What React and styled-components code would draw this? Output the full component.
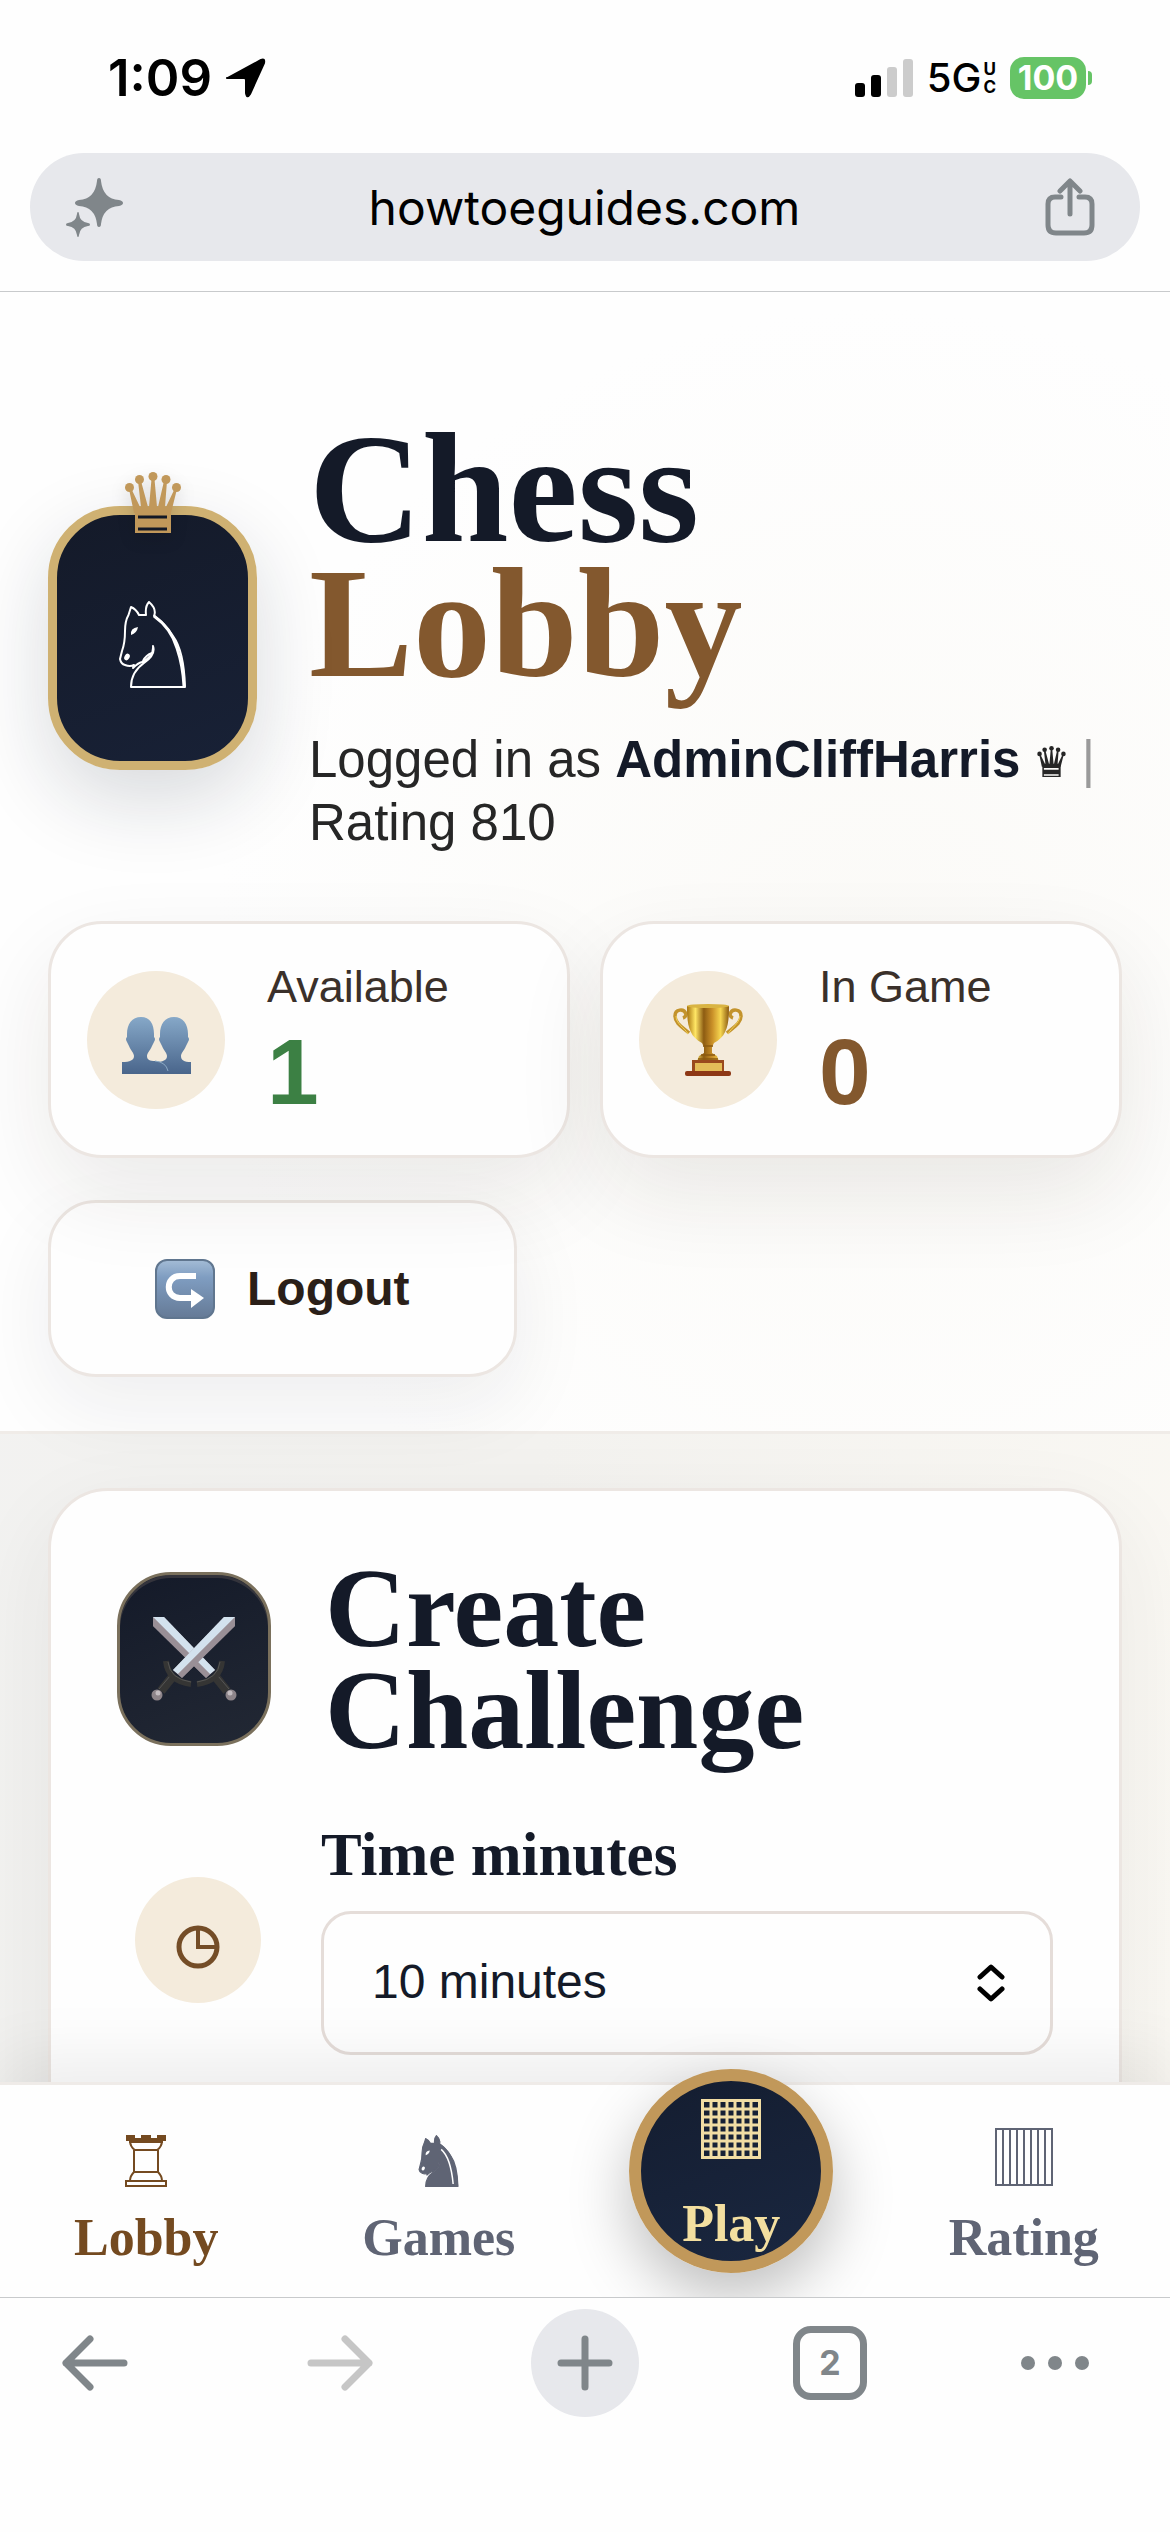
import styled, { createGlobalStyle } from 'styled-components'

const colors = {
  navy: '#141a28',
  brown: '#83582e',
  gold: '#c1985a',
  green: '#3c8044',
  cream: '#f4ebdc',
  line: '#ece6e2',
  slate: '#5f6474',
  chrome: '#80868a',
  pill: '#e7e8ec'
}

const serif = `'Liberation Serif', 'Times New Roman', serif`
const sans = `'Liberation Sans', Arial, sans-serif`
const system = `Inter, Roboto, sans-serif`

const GlobalStyle = createGlobalStyle`
  * {
    box-sizing: border-box;
  }
  body {
    margin: 0;
    background: #fefefe;
    color: ${colors.navy};
    font-family: ${sans};
  }
  svg {
    display: block;
    flex: none;
  }
  button {
    padding: 0;
    border: 0;
    background: none;
    color: inherit;
    font: inherit;
    cursor: pointer;
  }
`

function App() {
  return (
    <Screen>
      <GlobalStyle />
      <header>
        <StatusBar>
          <StatusGroup>
            <Clock>1:09</Clock>
            <LocationIcon />
          </StatusGroup>
          <StatusGroup>
            <SignalIcon />
            <Network>
              5G
              <NetworkBand>
                <span>U</span>
                <span>C</span>
              </NetworkBand>
            </Network>
            <Battery>100</Battery>
          </StatusGroup>
        </StatusBar>
        <AddressBar>
          <button aria-label="Assistant"><SparkleIcon /></button>
          <Address>howtoeguides.com</Address>
          <button aria-label="Share"><ShareIcon /></button>
        </AddressBar>
      </header>

      <Page>
        <Hero>
          <Intro>
            <Emblem>
              <Crown><QueenIcon width={56} height={61} /></Crown>
              <KnightIcon width={67} height={87} />
            </Emblem>
            <div>
              <Title>Chess <TitleAccent>Lobby</TitleAccent></Title>
              <Account>
                Logged in as <strong>AdminCliffHarris</strong> <InlineQueen width={29} height={31} /> <Divider>|</Divider> Rating 810
              </Account>
            </div>
          </Intro>
          <Stats>
            <Stat>
              <Disc size={138}><PeopleIcon /></Disc>
              <div>
                <StatLabel>Available</StatLabel>
                <StatValue color={colors.green}>1</StatValue>
              </div>
            </Stat>
            <Stat>
              <Disc size={138}><TrophyIcon /></Disc>
              <div>
                <StatLabel>In Game</StatLabel>
                <StatValue color={colors.brown}>0</StatValue>
              </div>
            </Stat>
          </Stats>
          <LogoutButton>
            <ReturnIcon />
            Logout
          </LogoutButton>
        </Hero>

        <Content>
          <Card>
            <CardHeader>
              <Badge><SwordsIcon /></Badge>
              <CardTitle>Create Challenge</CardTitle>
            </CardHeader>
            <Field>
              <Disc size={126}><TimeIcon /></Disc>
              <FieldBody>
                <Label htmlFor="minutes">Time minutes</Label>
                <SelectWrap>
                  <Select id="minutes" defaultValue="10">
                    <option value="5">5 minutes</option>
                    <option value="10">10 minutes</option>
                    <option value="15">15 minutes</option>
                  </Select>
                  <UpDownIcon />
                </SelectWrap>
              </FieldBody>
            </Field>
          </Card>
        </Content>
      </Page>

      <TabBar>
        <Tab href="#lobby" color="#744a20"><TabIcon><RookIcon /></TabIcon>Lobby</Tab>
        <Tab href="#games" color={colors.slate}><TabIcon><KnightIcon width={41} height={52} solid /></TabIcon>Games</Tab>
        <PlayTab href="#play"><TabIcon><BoardIcon /></TabIcon>Play</PlayTab>
        <Tab href="#rating" color={colors.slate}><TabIcon><BarsIcon /></TabIcon>Rating</Tab>
      </TabBar>

      <Toolbar>
        <ToolButton aria-label="Back"><ArrowIcon /></ToolButton>
        <ToolButton aria-label="Forward" faded><ArrowIcon flip /></ToolButton>
        <ToolButton aria-label="New tab" filled><PlusIcon /></ToolButton>
        <ToolButton aria-label="Tabs"><TabCount>2</TabCount></ToolButton>
        <MoreButton aria-label="More"><DotsIcon /></MoreButton>
      </Toolbar>
    </Screen>
  );
}

export default App;

const LocationIcon = () => (
  <svg width="40" height="40" viewBox="0 0 40 40">
    <path d="M2 20 35 2q4-2 3 3L24 36q-3 5-4-1V22q0-2-2-2H4q-5 0-2-0Z" fill="#000" stroke="#000" strokeWidth="2" strokeLinejoin="round" />
  </svg>
)

const SignalIcon = () => (
  <svg width="58" height="38" viewBox="0 0 58 38">
    <rect x="0" y="24" width="10" height="14" rx="3" />
    <rect x="16" y="16" width="10" height="22" rx="3" />
    <rect x="32" y="8" width="10" height="30" rx="3" fill="#ccc" />
    <rect x="48" y="0" width="10" height="38" rx="3" fill="#ccc" />
  </svg>
)

const SparkleIcon = () => (
  <svg width="58" height="60" viewBox="0 0 58 60" fill={colors.chrome}>
    <path d="M33 1q2 0 2 3 2 18 18 19 4 1 4 3t-4 3q-16 1-18 18 0 3-2 3t-2-3q-2-17-18-18-4-1-4-3t4-3q16-1 18-19 0-3 2-3Z" />
    <path d="M12 35q1 0 1 2 1 8 9 9 2 0 2 1.500t-2 1.500q-8 1-9 9 0 2-1 2t-1-2q-1-8-9-9-2 0-2-1.500t2-1.500q8-1 9-9 0-2 1-2Z" />
  </svg>
)

const ShareIcon = () => (
  <svg width="50" height="58" viewBox="0 0 50 58" fill="none" stroke={colors.chrome} strokeWidth="5" strokeLinecap="round" strokeLinejoin="round">
    <path d="M16 19h-6q-7 0-7 7v21q0 8 8 8h28q8 0 8-8V26q0-7-7-7h-6" />
    <path d="M25 36V4M15 13 25 3l10 10" />
  </svg>
)

const KnightIcon = ({ width, height, solid }) => (
  <svg width={width} height={height} viewBox="0 0 67 87" fill={solid ? 'currentColor' : 'none'} stroke="currentColor" strokeWidth="2" strokeLinejoin="round">
    <path d="M12 6 9.500 14Q6 20 6 30 6 42 3 50L1 58q1 5 5 6 5 2 9 0l-1 3q5-5 9-6 12-5 11-16 3 9-9 17-13 9-13 24h54Q65 50 54 35 46 22 35 15q3-7-5-14-4 4-3 13h-7Q17 8 12 6Z" />
    <path d="M35 15Q52 27 58 47q6 18 7 38" strokeWidth="3" fill="none" />
    {solid ? (
      <path d="M38 24q16 14 20 58" stroke="#fff" strokeWidth="2.500" fill="none" />
    ) : (
      <path d="M24 60q3-6 9-8" />
    )}
    <path d="M12 34q-1-7 7-8-1 6-7 8Z" fill={solid ? '#fff' : 'currentColor'} stroke="none" />
    <ellipse cx="8" cy="56" rx="2.500" ry="3.500" fill={solid ? '#fff' : 'currentColor'} stroke="none" transform="rotate(30 8 56)" />
  </svg>
)

const QueenIcon = ({ width, height, className }) => (
  <svg className={className} width={width} height={height} viewBox="0 0 56 61" fill="currentColor">
    <circle cx="4.500" cy="15.500" r="4.500" />
    <circle cx="14.500" cy="7.500" r="4.500" />
    <circle cx="28" cy="4.500" r="4.500" />
    <circle cx="41" cy="7.500" r="4.500" />
    <circle cx="51.500" cy="15.500" r="4.500" />
    <path d="m4 17 5 24h37l6-24-2-1-9 19h-1l2-26h-3l-6 26h-1L29.500 7h-3L24 35h-1L16 9h-3l3 26h-1L6 16Z" />
    <path fillRule="evenodd" d="M10 38h36v23H10ZM13 43.500v3h29v-3ZM13 55.500v3h29v-3Z" />
  </svg>
)

const PeopleIcon = () => (
  <svg width="69" height="69" viewBox="0 -12 69 69">
    <defs>
      <linearGradient id="people" gradientUnits="userSpaceOnUse" x1="0" y1="0" x2="0" y2="57">
        <stop offset="0" stopColor="#86a8c8" />
        <stop offset="1" stopColor="#49658b" />
      </linearGradient>
    </defs>
    <path d="M52 0c9 0 14 7 14 17v3q2 2 0 5l-2 4c-2 5-5 7-5 10 0 4 3 6 10 6v12H33V45c8 0 12-2 12-6 0-3-3-5-5-10l-2-4q-2-3 0-5v-3C38 7 43 0 52 0Z" fill="url(#people)" />
    <path d="M19 0c9 0 13 7 13 17v3q2 2 0 5l-2 4c-2 5-5 7-5 10 0 4 3 5 8 5 7 0 11 5 13 13H0V45c8 0 12-2 12-6 0-3-3-5-5-10l-2-4q-2-3 0-5v-3C5 7 10 0 19 0Z" fill="url(#people)" />
    <path d="M33 44q11 1 13 10" fill="none" stroke="#8dabc6" />
  </svg>
)

const TrophyIcon = () => (
  <svg width="70" height="72" viewBox="0 0 70 72">
    <defs>
      <linearGradient id="cup">
        <stop offset="0" stopColor="#a8740f" />
        <stop offset=".2" stopColor="#ffe665" />
        <stop offset=".4" stopColor="#8d5c12" />
        <stop offset=".6" stopColor="#c98f28" />
        <stop offset=".8" stopColor="#f6d650" />
        <stop offset="1" stopColor="#8b5a10" />
      </linearGradient>
    </defs>
    <path d="M16 29C11 24 2 20 2 12 2 5 11 4 13 10q0 3-3 4M54 29c5-5 14-9 14-17 0-7-9-8-11-2q0 3 3 4" fill="none" stroke="#c3932c" strokeWidth="3.500" />
    <path d="M15 30C12 24 3 20 3 12M55 30c3-6 11-10 12-18" fill="none" stroke="#f3d35b" strokeWidth="1" />
    <path d="M14 2h42c0 16-1 30-15 37l-2 4v6l5 3 2 5H24l2-5 5-3v-6l-2-4C15 32 14 18 14 2Z" fill="url(#cup)" />
    <ellipse cx="35" cy="2" rx="21" ry="2" fill="#d9b443" />
    <path d="M30 42h10M28 51h14M25 55h20" stroke="#8b5a10" strokeWidth="1.500" />
    <path d="M19 56h32v12H19Z" fill="#9a4a1d" />
    <path d="M22 59h27v9H22Z" fill="#e4bd58" />
    <rect x="12" y="67" width="46" height="5" rx="2" fill="#8d3816" />
  </svg>
)

const ReturnIcon = () => (
  <svg width="60" height="60" viewBox="0 0 60 60">
    <defs>
      <linearGradient id="key" x1="0" y1="0" x2="0" y2="1">
        <stop offset="0" stopColor="#a4bcd6" />
        <stop offset=".3" stopColor="#7f9dc1" />
        <stop offset="1" stopColor="#657a96" />
      </linearGradient>
    </defs>
    <rect x="1" y="1" width="58" height="58" rx="11" fill="url(#key)" stroke="#60768f" strokeWidth="2" />
    <path d="M41 17H25c-15 0-15 22 0 22h12" fill="none" stroke="#fff" strokeWidth="6" />
    <path d="M36 30v19l13-10Z" fill="#fff" />
  </svg>
)

const Sword = () => (
  <g>
    <path d="M2 1h11l51 53-9 8L2 10Z" fill="#aba2a9" />
    <path d="M2 1h11l51 53-5 4Z" fill="#d3e2ee" />
    <path d="m2 1 57 57-4 4L2 10Z" fill="#877b83" opacity=".5" />
    <path d="m64 60 12 15" stroke="#353534" strokeWidth="9" />
    <path d="m67 60 11 13" stroke="#555" strokeWidth="1" />
    <path d="M71 45q-2 20-25 23" fill="none" stroke="#353534" strokeWidth="6" />
    <path d="M69 46q-2 17-23 20" fill="none" stroke="#565654" strokeWidth="1" />
    <circle cx="80" cy="79" r="5.500" fill="#8d8489" />
    <circle cx="79" cy="77" r="2.500" fill="#c3bcc0" />
  </g>
)

const SwordsIcon = () => (
  <svg width="86" height="86" viewBox="0 0 86 86">
    <Sword />
    <g transform="translate(86 0) scale(-1 1)"><Sword /></g>
  </svg>
)

const TimeIcon = () => (
  <svg width="44" height="58" viewBox="0 0 44 58" fill="none" stroke="#744d27" strokeWidth="5">
    <circle cx="22" cy="36" r="19" />
    <path d="M22 17v19h19" strokeWidth="4" />
  </svg>
)

const UpDownIcon = () => (
  <svg width="28" height="38" viewBox="0 0 28 38" fill="none" stroke="#000" strokeWidth="5" strokeLinecap="round" strokeLinejoin="round">
    <path d="M3 13 14 3l11 10M3 25l11 10 11-10" />
  </svg>
)

const RookIcon = () => (
  <svg width="42" height="52" viewBox="0 0 42 52" fill="none" stroke="currentColor" strokeWidth="2">
    <path d="M1 0h9v3h6V0h10v3h6V0h9v6H1Z" fill="currentColor" stroke="none" />
    <path d="M5 5q0 7 5 10h22q5-3 5-10M9 15v22M33 15v22M9 37q-4 4-4 9h32q0-5-4-9ZM1 46h40v5H1ZM4 7h34" />
  </svg>
)

const BoardIcon = () => (
  <svg width="60" height="60" viewBox="0 0 60 60" stroke="#f1dda4" fill="none" strokeWidth="3">
    <path d="M1.500 1.500h57v57h-57ZM10 1v58M18 1v58M26 1v58M34 1v58M42 1v58M50 1v58M1 10h58M1 18h58M1 26h58M1 34h58M1 42h58M1 50h58" />
  </svg>
)

const BarsIcon = () => (
  <svg width="60" height="60" viewBox="0 0 60 60" stroke="currentColor" fill="none" strokeWidth="2">
    <path d="M2 2h56v56H2ZM9 2v56M16 2v56M23 2v56M30 2v56M37 2v56M44 2v56M51 2v56" />
  </svg>
)

const ArrowIcon = ({ flip }) => (
  <svg width="68" height="56" viewBox="0 0 68 56" fill="none" stroke="currentColor" strokeWidth="7" strokeLinecap="round" strokeLinejoin="round">
    <path d={flip ? 'M5 28h58M39 4l24 24-24 24' : 'M63 28H5M29 4 5 28l24 24'} />
  </svg>
)

const PlusIcon = () => (
  <svg width="56" height="56" viewBox="0 0 56 56" stroke="currentColor" strokeWidth="7" strokeLinecap="round">
    <path d="M28 4v48M4 28h48" />
  </svg>
)

const DotsIcon = () => (
  <svg width="68" height="14" viewBox="0 0 68 14" fill="currentColor">
    <circle cx="7" cy="7" r="7" />
    <circle cx="34" cy="7" r="7" />
    <circle cx="61" cy="7" r="7" />
  </svg>
)

const Screen = styled.div`
  display: flex;
  flex-direction: column;
  height: 100vh;
`;

const StatusBar = styled.div`
  display: flex;
  align-items: center;
  justify-content: space-between;
  padding: 48px 84px 45px 108px;
  color: #000;
  font-family: ${system};
  line-height: 60px;
`;

const StatusGroup = styled.div`
  display: flex;
  align-items: center;
  gap: 14px;
`;

const Clock = styled.span`
  font-size: 51px;
  font-weight: 600;
`;

const Network = styled.span`
  display: flex;
  align-items: center;
  gap: 2px;
  font-size: 40px;
  font-weight: 500;
`;

const NetworkBand = styled.span`
  display: flex;
  flex-direction: column;
  gap: 2px;
  font-size: 17px;
  font-weight: 700;
  line-height: 16px;
`;

const Battery = styled.span`
  position: relative;
  width: 76px;
  border-radius: 14px;
  background: #66c466;
  color: #fff;
  font-size: 34px;
  font-weight: 700;
  line-height: 42px;
  text-align: center;

  &::after {
    content: '';
    position: absolute;
    top: 14px;
    right: -6px;
    width: 4px;
    height: 14px;
    border-radius: 0 4px 4px 0;
    background: #66c466;
  }
`;

const AddressBar = styled.div`
  display: flex;
  align-items: center;
  justify-content: space-between;
  height: 108px;
  margin: 0 30px 30px;
  padding: 0 45px 0 36px;
  border-radius: 54px;
  background: ${colors.pill};
`;

const Address = styled.span`
  color: #000;
  font-family: ${system};
  font-size: 48px;
`;

const Page = styled.main`
  flex: 1;
  min-height: 0;
  overflow-y: auto;
  scrollbar-width: none;
  border-top: 1px solid #c8cacc;
  background: linear-gradient(100deg, #f2f2f1, #f3f2ef 50%, #faf8f3);
`;

const Hero = styled.section`
  padding: 129px 48px 54px;
  border-bottom: 3px solid #f0ece8;
  background: radial-gradient(circle at 75% 60%, #fbfaf7, #fefefe 60%);
`;

const Intro = styled.div`
  display: flex;
  align-items: center;
  gap: 52px;
`;

const Emblem = styled.div`
  position: relative;
  display: flex;
  flex: none;
  align-items: center;
  justify-content: center;
  width: 209px;
  height: 264px;
  padding-top: 14px;
  border: 9px solid #cfb172;
  border-radius: 72px;
  background: linear-gradient(160deg, #141a29, #182136);
  box-shadow: 0 30px 80px rgba(20, 30, 50, .16);
  color: #fff;
`;

const Crown = styled.span`
  position: absolute;
  top: -43px;
  color: ${colors.gold};
  filter: drop-shadow(0 6px 8px rgba(0, 0, 0, .15));
`;

const Title = styled.h1`
  margin: 0 0 37px;
  font-family: ${serif};
  font-size: 156px;
  font-weight: 700;
  line-height: 135px;
`;

const TitleAccent = styled.span`
  display: block;
  color: ${colors.brown};
`;

const Account = styled.p`
  margin: 0;
  color: #262626;
  font-size: 51px;
  line-height: 63px;

  strong {
    color: ${colors.navy};
  }
`;

const InlineQueen = styled(QueenIcon)`
  display: inline-block;
  margin: 0 2px;
`;

const Divider = styled.span`
  color: #9a9a9a;
`;

const Stats = styled.div`
  display: grid;
  grid-template-columns: repeat(2, 1fr);
  gap: 30px;
  margin: 67px 0 42px;
`;

const Stat = styled.div`
  display: flex;
  align-items: center;
  gap: 42px;
  padding: 36px;
  border: 3px solid ${colors.line};
  border-radius: 54px;
  background: #fefefe;
  box-shadow: 0 36px 90px rgba(40, 30, 20, .09);
`;

const Disc = styled.span`
  display: flex;
  flex: none;
  align-items: center;
  justify-content: center;
  width: ${({ size }) => size}px;
  height: ${({ size }) => size}px;
  border-radius: 50%;
  background: ${colors.cream};
`;

const StatLabel = styled.div`
  margin-bottom: 12px;
  color: #3a302a;
  font-size: 45px;
  line-height: 54px;
`;

const StatValue = styled.div`
  color: ${({ color }) => color};
  font-size: 93px;
  font-weight: 700;
  line-height: 93px;
`;

const LogoutButton = styled.button`
  && {
    display: flex;
    align-items: center;
    gap: 32px;
    padding: 54px 104px;
    border: 3px solid ${colors.line};
    border-radius: 48px;
    background: #fefefe;
    box-shadow: 0 30px 80px rgba(30, 25, 40, .07);
    color: #2a1f18;
    font-family: ${sans};
    font-size: 48px;
    font-weight: 700;
    line-height: 63px;
  }
`;

const Content = styled.section`
  padding: 54px 48px 120px;
`;

const Card = styled.div`
  padding: 66px 66px 120px;
  border: 3px solid ${colors.line};
  border-radius: 60px;
  background: #fefefe;
  box-shadow: 0 30px 90px rgba(40, 40, 40, .07);
`;

const CardHeader = styled.div`
  display: flex;
  align-items: center;
  gap: 54px;
  margin-bottom: 64px;
`;

const Badge = styled.div`
  display: flex;
  flex: none;
  align-items: center;
  justify-content: center;
  width: 154px;
  height: 174px;
  border: 3px solid #7a705c;
  border-radius: 54px;
  background: linear-gradient(160deg, #141a29, #222834);
  box-shadow: inset 0 3px 0 #34343c;
`;

const CardTitle = styled.h2`
  width: min-content;
  margin: 0;
  font-family: ${serif};
  font-size: 112px;
  font-weight: 700;
  line-height: 102px;
`;

const Field = styled.div`
  display: grid;
  grid-template-columns: 162px 1fr;
  gap: 42px;
  align-items: center;

  ${Disc} {
    justify-self: center;
  }
`;

const FieldBody = styled.div`
  display: flex;
  flex-direction: column;
  gap: 26px;
`;

const Label = styled.label`
  font-family: ${serif};
  font-size: 61px;
  font-weight: 700;
  line-height: 60px;
`;

const SelectWrap = styled.div`
  position: relative;

  svg {
    position: absolute;
    top: 50%;
    right: 48px;
    transform: translateY(-50%);
    pointer-events: none;
  }
`;

const Select = styled.select`
  display: block;
  width: 100%;
  height: 144px;
  padding: 0 48px 4px;
  border: 3px solid #e5ddd9;
  border-radius: 30px;
  appearance: none;
  background: #fefefe;
  color: ${colors.navy};
  font-family: ${sans};
  font-size: 48px;
`;

const TabBar = styled.nav`
  position: relative;
  display: grid;
  grid-template-columns: repeat(4, 1fr);
  align-items: start;
  justify-items: center;
  padding: 42px 0 32px;
  border-top: 3px solid #efebe8;
  background: #fefefe;
  box-shadow: 0 -24px 60px rgba(0, 0, 0, .07);
`;

const TabIcon = styled.span`
  display: flex;
  align-items: flex-end;
  height: 60px;
`;

const Tab = styled.a`
  display: flex;
  flex-direction: column;
  align-items: center;
  gap: 24px;
  color: ${({ color }) => color};
  font-family: ${serif};
  font-size: 52px;
  font-weight: 700;
  line-height: 54px;
  text-decoration: none;
`;

const PlayTab = styled(Tab)`
  gap: 38px;
  width: 204px;
  height: 204px;
  margin: -58px 0 -8px;
  padding-top: 18px;
  border: 12px solid ${colors.gold};
  border-radius: 50%;
  background: linear-gradient(160deg, #141d30, #1a2740);
  box-shadow: 0 24px 60px rgba(0, 0, 0, .25);
  color: #f3dfa0;
`;

const Toolbar = styled.footer`
  position: relative;
  display: grid;
  grid-template-columns: repeat(4, 245fr) 108fr;
  padding: 11px 41px 115px;
  border-top: 1px solid #c8cacc;
  background: #fefefe;
  color: ${colors.chrome};
`;

const ToolButton = styled.button.withConfig({
  shouldForwardProp: (prop) => !['faded', 'filled'].includes(prop)
})`
  && {
    display: flex;
    align-items: center;
    justify-content: center;
    width: 108px;
    height: 108px;
    border-radius: 50%;
    background: ${({ filled }) => (filled ? colors.pill : 'none')};
    color: ${({ faded }) => (faded ? '#c6c6c6' : colors.chrome)};
  }
`;

const MoreButton = styled(ToolButton)`
  && {
    width: 68px;
  }
`;

const TabCount = styled.span`
  width: 74px;
  height: 74px;
  border: 7px solid ${colors.chrome};
  border-radius: 18px;
  font-family: ${system};
  font-size: 34px;
  font-weight: 700;
  line-height: 60px;
`;
